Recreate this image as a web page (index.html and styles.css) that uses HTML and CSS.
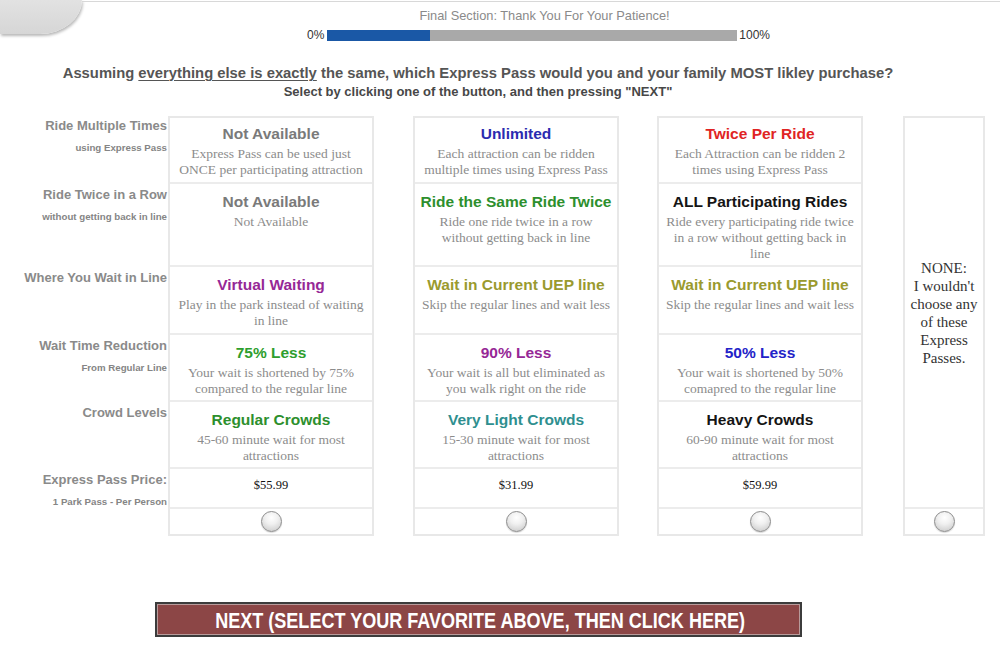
FILE: index.html
```html
<!DOCTYPE html>
<html>
<head>
<meta charset="utf-8">
<title>Express Pass Survey</title>
<link rel="stylesheet" href="styles.css">
</head>
<body>
<div class="page">
  <header class="top">
    <div class="tab"></div>
    <div class="topline">
      <div class="progress">
        <div class="ptitle">Final Section: Thank You For Your Patience!</div>
        <div class="prow">
          <span class="pct">0%</span>
          <div class="bar"><div class="fill" style="width:25%"></div></div>
          <span class="pct">100%</span>
        </div>
      </div>
    </div>
  </header>

  <div class="center-wrap">
    <h1 class="question">Assuming <u>everything else is exactly</u> the same, which Express Pass would you and your family MOST likley purchase?</h1>
    <p class="sub">Select by clicking one of the button, and then pressing "NEXT"</p>
  </div>

  <div class="grid">
    <div class="labels">
      <div class="lab r1"><div class="lt">Ride Multiple Times</div><div class="ls">using Express Pass</div></div>
      <div class="lab r2"><div class="lt">Ride Twice in a Row</div><div class="ls">without getting back in line</div></div>
      <div class="lab r3"><div class="lt">Where You Wait in Line</div></div>
      <div class="lab r4"><div class="lt">Wait Time Reduction</div><div class="ls">From Regular Line</div></div>
      <div class="lab r5"><div class="lt">Crowd Levels</div></div>
      <div class="lab r6"><div class="lt">Express Pass Price:</div><div class="ls">1 Park Pass - Per Person</div></div>
    </div>

    <div class="col c1">
      <div class="cell r1"><div class="ct gray">Not Available</div><div class="cd">Express Pass can be used just ONCE per participating attraction</div></div>
      <div class="cell r2"><div class="ct gray">Not Available</div><div class="cd">Not Available</div></div>
      <div class="cell r3"><div class="ct purple">Virtual Waiting</div><div class="cd">Play in the park instead of waiting in line</div></div>
      <div class="cell r4"><div class="ct green">75% Less</div><div class="cd">Your wait is shortened by 75% compared to the regular line</div></div>
      <div class="cell r5"><div class="ct dgreen">Regular Crowds</div><div class="cd">45-60 minute wait for most attractions</div></div>
      <div class="cell r6"><div class="price">$55.99</div></div>
      <div class="cell r7"><span class="radio"></span></div>
    </div>

    <div class="col c2">
      <div class="cell r1"><div class="ct blue">Unlimited</div><div class="cd">Each attraction can be ridden multiple times using Express Pass</div></div>
      <div class="cell r2"><div class="ct dgreen">Ride the Same Ride Twice</div><div class="cd">Ride one ride twice in a row without getting back in line</div></div>
      <div class="cell r3"><div class="ct olive">Wait in Current UEP line</div><div class="cd">Skip the regular lines and wait less</div></div>
      <div class="cell r4"><div class="ct purple">90% Less</div><div class="cd">Your wait is all but eliminated as you walk right on the ride</div></div>
      <div class="cell r5"><div class="ct teal">Very Light Crowds</div><div class="cd">15-30 minute wait for most attractions</div></div>
      <div class="cell r6"><div class="price">$31.99</div></div>
      <div class="cell r7"><span class="radio"></span></div>
    </div>

    <div class="col c3">
      <div class="cell r1"><div class="ct red">Twice Per Ride</div><div class="cd">Each Attraction can be ridden 2 times using Express Pass</div></div>
      <div class="cell r2"><div class="ct black">ALL Participating Rides</div><div class="cd">Ride every participating ride twice in a row without getting back in line</div></div>
      <div class="cell r3"><div class="ct olive">Wait in Current UEP line</div><div class="cd">Skip the regular lines and wait less</div></div>
      <div class="cell r4"><div class="ct blue2">50% Less</div><div class="cd">Your wait is shortened by 50% comapred to the regular line</div></div>
      <div class="cell r5"><div class="ct black">Heavy Crowds</div><div class="cd">60-90 minute wait for most attractions</div></div>
      <div class="cell r6"><div class="price">$59.99</div></div>
      <div class="cell r7"><span class="radio"></span></div>
    </div>

    <div class="col c4">
      <div class="cell none">NONE:<br>I wouldn't choose any of these Express Passes.</div>
      <div class="cell r7"><span class="radio"></span></div>
    </div>
  </div>

  <div class="center-wrap next-wrap">
    <button class="next" type="button"><span class="next-text">NEXT (SELECT YOUR FAVORITE ABOVE, THEN CLICK HERE)</span></button>
  </div>
</div>
</body>
</html>
```

FILE: styles.css
```css
* { box-sizing: border-box; }

html, body {
  margin: 0;
  padding: 0;
  background: #ffffff;
}

body {
  font-family: "Liberation Sans", Arial, sans-serif;
  color: #555;
}

.page {
  width: 1000px;
  height: 647px;
  overflow: hidden;
}

/* header */
.top {
  display: flex;
  align-items: flex-start;
  height: 44px;
}

.tab {
  flex: 0 0 82px;
  height: 34px;
  background: linear-gradient(#e2e2e2, #d6d6d6);
  border-bottom-right-radius: 42px 34px;
  box-shadow: 1px 2px 3px rgba(0, 0, 0, 0.28);
}

.topline {
  flex: 1;
  margin-top: 1px;
  border-top: 1px solid #d8d8d8;
  padding-left: 225px;
}

.progress {
  width: 469px;
}

.ptitle {
  text-align: center;
  font-size: 12.8px;
  line-height: 14px;
  color: #8a8a8a;
  padding-top: 7px;
  padding-left: 6px;
}

.prow {
  display: flex;
  align-items: center;
  height: 14px;
  margin-top: 5px;
}

.pct {
  font-size: 12px;
  line-height: 14px;
  color: #333;
}

.bar {
  width: 410px;
  height: 11px;
  margin: 0 2px 0 3px;
  background: #a9a9a9;
}

.fill {
  height: 100%;
  background: #1a58a6;
}

/* question */
.center-wrap {
  width: 956px;
  text-align: center;
}

.question {
  margin: 20px 0 0;
  font-size: 14.8px;
  line-height: 18px;
  font-weight: bold;
  color: #555;
}

.question u {
  text-decoration-thickness: 1px;
  text-underline-offset: 2px;
}

.sub {
  margin: 2px 0 0;
  font-size: 13px;
  line-height: 16px;
  font-weight: bold;
  color: #474747;
}

/* grid */
.grid {
  display: flex;
  align-items: flex-start;
  margin-top: 16px;
}

.labels {
  width: 167px;
  display: flex;
  flex-direction: column;
  text-align: right;
}

.lab { padding-top: 4px; }
.labels .r1 { height: 67px; padding-top: 2px; }
.labels .r2 { height: 83px; }
.labels .r3 { height: 68px; }
.labels .r4 { height: 67px; }
.labels .r5 { height: 67px; }
.labels .r6 { height: 40px; }

.lt {
  font-size: 13px;
  line-height: 16px;
  font-weight: bold;
  color: #8a8a8a;
  white-space: nowrap;
}

.ls {
  margin-top: 8px;
  font-size: 9.7px;
  line-height: 12px;
  font-weight: bold;
  color: #858585;
  white-space: nowrap;
}

.col {
  display: flex;
  flex-direction: column;
  gap: 2px;
  border: 2px solid #e8e8e8;
  background: #ececec;
}

.c1 { width: 206px; margin-left: 1px; }
.c2 { width: 206px; margin-left: 39px; }
.c3 { width: 206px; margin-left: 38px; }
.c4 { width: 82px; margin-left: 40px; }

.cell {
  background: #ffffff;
  text-align: center;
  padding: 9px 5px 0;
}

.col .r1 { height: 64px; }
.col .r2 { height: 81px; }
.col .r3 { height: 66px; }
.col .r4 { height: 65px; }
.col .r5 { height: 65px; }
.col .r6 { height: 38px; }
.col .r7 {
  height: 25px;
  padding: 0;
  display: flex;
  align-items: center;
  justify-content: center;
}

.col .r1.cell { padding-top: 7px; }

.ct {
  font-size: 15.5px;
  line-height: 18px;
  font-weight: bold;
  white-space: nowrap;
}

.cd {
  margin-top: 3px;
  font-family: "Liberation Serif", "Times New Roman", serif;
  font-size: 13.5px;
  line-height: 16px;
  color: #8c8c8c;
}

.gray { color: #7a7a7a; }
.blue { color: #2b2bb0; }
.blue2 { color: #2323c8; }
.red { color: #e02424; }
.green { color: #2e9e2e; }
.dgreen { color: #2d8f2d; }
.black { color: #151515; }
.purple { color: #962896; }
.olive { color: #9a9a2e; }
.teal { color: #2f8f8f; }

.col .r6.cell { padding-top: 8px; }

.price {
  font-family: "Liberation Serif", "Times New Roman", serif;
  font-size: 12.5px;
  line-height: 16px;
  color: #111;
}

.none {
  height: 389px;
  display: flex;
  align-items: center;
  justify-content: center;
  padding: 0 4px;
  font-family: "Liberation Serif", "Times New Roman", serif;
  font-size: 15px;
  line-height: 18px;
  color: #333;
}

.radio {
  width: 21px;
  height: 21px;
  border-radius: 50%;
  border: 1px solid #8c8c8c;
  background: radial-gradient(circle at 50% 30%, #ffffff 0%, #f0f0f0 40%, #c4c4c4 100%);
  box-shadow: 0 1px 1px rgba(0, 0, 0, 0.15);
}

/* next */
.next-wrap {
  margin-top: 66px;
}

.next {
  width: 647px;
  height: 35px;
  padding: 0;
  border: 2px solid #3c3c3c;
  box-shadow: inset 0 0 0 1px #b89a9a;
  background: #8c4646;
  color: #ffffff;
  font-family: "Liberation Sans", Arial, sans-serif;
  font-size: 22px;
  font-weight: bold;
  line-height: 31px;
  cursor: pointer;
  overflow: hidden;
}

.next-text {
  display: inline-block;
  white-space: nowrap;
  transform: scaleX(0.82);
  padding-top: 1px;
}
```
